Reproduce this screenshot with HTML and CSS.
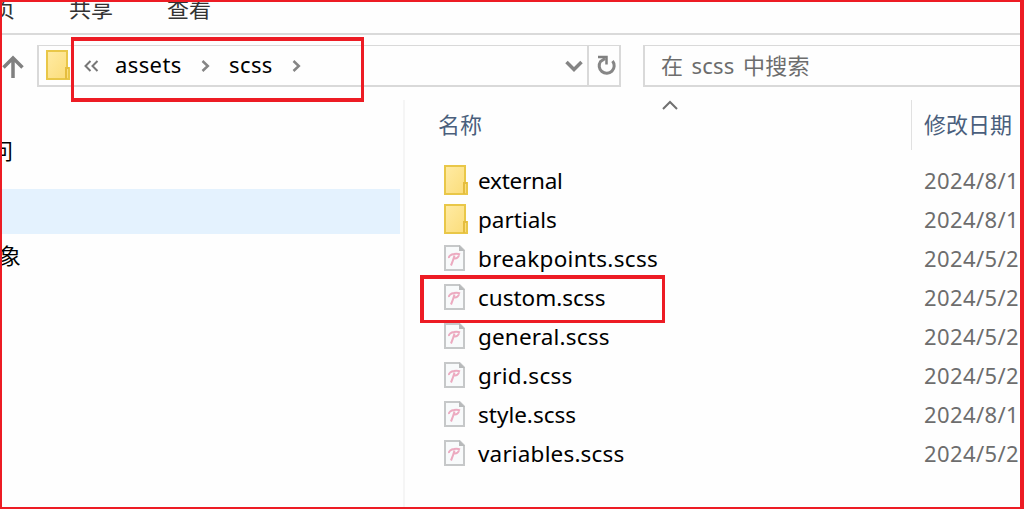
FILE: index.html
```html
<!DOCTYPE html>
<html lang="zh-CN">
<head>
<meta charset="utf-8">
<title>scss</title>
<link rel="stylesheet" href="styles.css">
</head>
<body>
<svg width="0" height="0" class="defs">
  <defs>
    <linearGradient id="fold" x1="0" y1="0" x2="1" y2="1"><stop offset="0" stop-color="#ffeba4"/><stop offset="1" stop-color="#fbdc78"/></linearGradient>
    <symbol id="folder" viewBox="0 0 24 30">
      <path d="M1 1H21V18H23V29H1Z" fill="url(#fold)" stroke="#e9c748" stroke-width="2"/>
      <path d="M20 29V18H23" fill="none" stroke="#e5bd3e" stroke-width="2"/>
    </symbol>
    <symbol id="file" viewBox="0 0 21 26">
      <path d="M1 1H15.500L20 5.500V25H1Z" fill="#f8fafb" stroke="#c6c8c9" stroke-width="2"/>
      <path d="M15 0V6H21Z" fill="#b8babb"/>
      <path d="M5 13C4.500 11 7 9.500 10 9C12 8.500 14 8.500 16 9.500M15 10.500C14 13 12 13.800 10 13.500M10.500 10.500C9.500 14 8.500 17 7 20.500" fill="none" stroke="#ecaac0" stroke-width="2"/>
    </symbol>
  </defs>
</svg>
<div class="window">
  <nav class="ribbon"><span>主页</span><span>共享</span><span>查看</span></nav>
  <div class="toolbar">
    <svg class="up" width="22" height="24" viewBox="0 0 22 24"><path d="M11 23V3M1.500 12.500L11 3L20.500 12.500" fill="none" stroke="#808080" stroke-width="3.500"/></svg>
    <div class="address">
      <svg class="folder" width="26" height="30" viewBox="0 0 26 30"><use href="#folder" width="24" height="30"/></svg>
      <svg class="back" width="15" height="12" viewBox="0 0 15 12"><path d="M6.500 1L1.500 6L6.500 11M13.500 1L8.500 6L13.500 11" fill="none" stroke="#777" stroke-width="2"/></svg>
      <span class="crumb assets">assets</span>
      <svg class="next" width="9" height="12" viewBox="0 0 9 12"><path d="M1.500 1L6.800 6L1.500 11" fill="none" stroke="#858585" stroke-width="2.500"/></svg>
      <span class="crumb scss">scss</span>
      <svg class="next last" width="9" height="12" viewBox="0 0 9 12"><path d="M1.500 1L6.800 6L1.500 11" fill="none" stroke="#858585" stroke-width="2.500"/></svg>
      <svg class="drop" width="18" height="12" viewBox="0 0 18 12"><path d="M1.500 2L9 9.500L16.500 2" fill="none" stroke="#848484" stroke-width="3.500"/></svg>
      <div class="refresh"><svg width="20" height="21" viewBox="0 0 20 21"><path d="M16.500 6A7.500 7.500 0 1 1 4.500 6.500L9 3.500" fill="none" stroke="#868686" stroke-width="3"/><path d="M2 2H10.500V9.500" fill="none" stroke="#808080" stroke-width="2.500"/></svg></div>
      <div class="callout path"></div>
    </div>
    <div class="search">在 scss 中搜索</div>
  </div>
  <main class="content">
    <aside class="tree">
      <div class="node"><span>访问</span></div>
      <div class="node selected"></div>
      <div class="node"><span class="objects">对象</span></div>
    </aside>
    <section class="files">
      <header class="heads"><div class="name">名称<svg class="sort" width="16" height="10" viewBox="0 0 16 10"><path d="M1 9L8 2L15 9" fill="none" stroke="#707070" stroke-width="2"/></svg></div><div class="date">修改日期</div></header>
      <div class="row"><svg class="dir"><use href="#folder"/></svg><span class="label tight">external</span><time>2024/8/1</time></div>
      <div class="row"><svg class="dir"><use href="#folder"/></svg><span class="label">partials</span><time>2024/8/1</time></div>
      <div class="row"><svg class="doc"><use href="#file"/></svg><span class="label wide">breakpoints.scss</span><time>2024/5/2</time></div>
      <div class="row"><svg class="doc"><use href="#file"/></svg><span class="label">custom.scss</span><time>2024/5/2</time><div class="callout custom"></div></div>
      <div class="row"><svg class="doc"><use href="#file"/></svg><span class="label loose">general.scss</span><time>2024/5/2</time></div>
      <div class="row"><svg class="doc"><use href="#file"/></svg><span class="label wide">grid.scss</span><time>2024/5/2</time></div>
      <div class="row"><svg class="doc"><use href="#file"/></svg><span class="label">style.scss</span><time>2024/8/1</time></div>
      <div class="row"><svg class="doc"><use href="#file"/></svg><span class="label loose">variables.scss</span><time>2024/5/2</time></div>
    </section>
  </main>
</div>
</body>
</html>
```
FILE: styles.css
```css
* { box-sizing: border-box; }
body { margin: 0; overflow: hidden; background: #fefefe; }
.defs { position: absolute; }
svg { display: block; flex: none; }
.window { display: flex; flex-direction: column; width: 1024px; height: 509px; overflow: hidden; border: 2px solid #ed1c24; border-right-width: 4px; font: 22.5px/30px "Noto Sans", "Noto Sans CJK SC", sans-serif; color: #000; white-space: nowrap; }
.ribbon { display: flex; flex: none; gap: 54px; height: 33px; margin-left: -31px; border-bottom: 2px solid #dadada; font-size: 22px; line-height: 12px; color: #333; }
.toolbar { display: flex; flex: none; height: 65px; padding-top: 10px; }
.up { margin: 10px 13px 0 0; }
.address { position: relative; display: flex; align-items: center; width: 584px; height: 42px; border: 2px solid #d9d9d9; border-top-width: 1px; }
.address .folder { margin: 0 0 2px 7px; }
.back { margin-left: 12px; }
.crumb { font-size: 22px; padding-bottom: 4px; letter-spacing: 0.4px; }
.assets { width: 67px; margin-left: 16px; }
.scss { width: 45px; margin-left: 19px; }
.next { margin-left: 19px; }
.next.last { margin-left: 18px; }
.drop { margin-left: auto; margin-right: 4px; }
.refresh { display: flex; align-items: center; justify-content: center; align-self: stretch; width: 32px; padding-left: 3px; border-left: 2px solid #d9d9d9; }
.search { flex: 1; height: 42px; margin-left: 22px; padding-left: 16px; border: 2px solid #d9d9d9; border-top-width: 1px; border-right: 0; line-height: 39px; font-size: 22px; letter-spacing: 0.2px; word-spacing: 2.5px; color: #6d6d6d; }
.callout { position: absolute; border: 4px solid #ed1c24; }
.path { left: 32px; top: -9px; width: 293px; height: 65px; border-width: 4px 3px; }
.content { display: flex; flex: 1; min-height: 0; }
.tree { width: 403px; flex: none; border-right: 2px solid #f5f5f5; padding-top: 35px; }
.node { height: 54px; font-size: 22px; }
.node span { display: block; margin-left: -33px; }
.node.selected { width: 398px; height: 45px; background: #e4f2fe; }
.node .objects { margin-left: -25px; padding-top: 6px; }
.files { flex: 1; min-width: 0; }
.heads { display: flex; height: 62px; color: #4a5f7c; font-size: 22px; line-height: 49px; }
.heads .name { position: relative; width: 506px; padding-left: 33px; }
.heads .date { height: 50px; padding-left: 12px; border-left: 1px solid #e1e1e1; }
.sort { position: absolute; left: 257px; top: 0; }
.row { position: relative; display: flex; height: 39px; padding-left: 39px; line-height: 38px; }
.dir { width: 24px; height: 30px; margin: 3px 10px 0 0; }
.doc { width: 21px; height: 26px; margin: 5px 13px 0 0; }
.label { width: 446px; }
.tight { letter-spacing: -0.25px; }
.loose { letter-spacing: 0.17px; }
.wide { letter-spacing: 0.3px; }
time { color: #6d6d6d; font-size: 22px; line-height: 37px; letter-spacing: 0.4px; }
.custom { left: 15px; top: -4px; width: 245px; height: 48px; border-right-width: 3px; border-bottom-width: 3px; }
```
